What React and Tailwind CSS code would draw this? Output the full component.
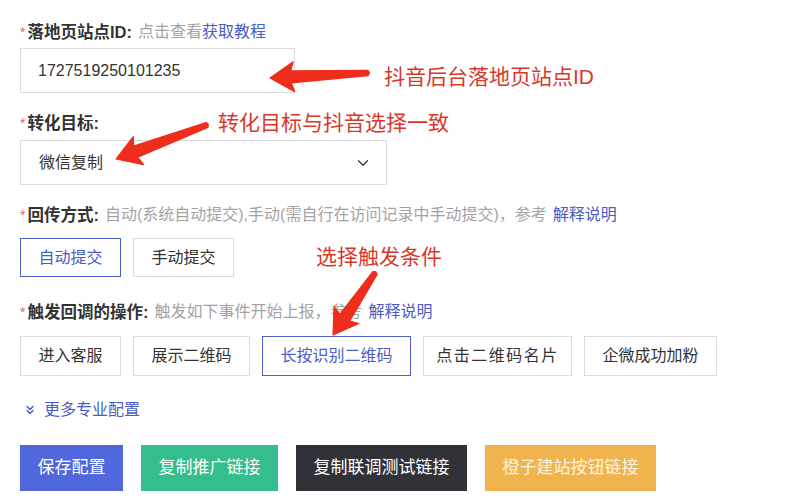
import { ChevronDown, ChevronsDown } from 'lucide-react'

const FONT = { fontFamily: '"Liberation Sans", "Noto Sans CJK SC", sans-serif' }

const TRIGGERS = [
  { label: '进入客服', w: 'w-[101px]' },
  { label: '展示二维码', w: 'w-[117px]' },
  { label: '长按识别二维码', w: 'w-[149px]', active: true },
  { label: '点击二维码名片', w: 'w-[149px]', wide: true },
  { label: '企微成功加粉', w: 'w-[133px]' },
]

const ACTIONS = [
  { label: '保存配置', cls: 'bg-[#5068dc] text-white' },
  { label: '复制推广链接', cls: 'bg-[#33be8b] text-white' },
  { label: '复制联调测试链接', cls: 'bg-[#303237] text-white' },
  { label: '橙子建站按钮链接', cls: 'bg-[#f0b44e] text-[#fdf3e0]' },
]

// 表单项标题：红色星号 + 粗体标题 + 灰色说明
function Label({ title, children }) {
  return (
    <div className="flex h-6 items-center text-base leading-6 whitespace-nowrap">
      <span className="mr-[2px] text-[14px] text-[#e8625a]">*</span>
      <span className="text-[16.5px] font-bold text-[#333]">{title}</span>
      <span className="ml-[6px] text-base text-[#a3a3a3]">{children}</span>
    </div>
  )
}

// 截图上的红色标注箭头，tip 为箭头尖端，tail 为尾部
function Arrow({ tip, tail }) {
  const dx = tail[0] - tip[0]
  const dy = tail[1] - tip[1]
  const L = Math.hypot(dx, dy)
  const deg = (Math.atan2(dy, dx) * 180) / Math.PI
  const pts = `0,0 24,-15 21,-6 ${L},-2.6 ${L + 1.5},0 ${L},2.6 21,6 24,15`
  return (
    <polygon
      points={pts}
      fill="#ee2d1c"
      stroke="#ee2d1c"
      strokeWidth="1.2"
      strokeLinejoin="round"
      transform={`translate(${tip[0]} ${tip[1]}) rotate(${deg})`}
    />
  )
}

export default function App() {
  return (
    <div className="relative h-[500px] w-[809px] overflow-hidden bg-white pl-5 pt-5" style={FONT}>
      {/* 落地页站点ID */}
      <Label title="落地页站点ID:">
        点击查看<span className="text-[#4a5cc5]">获取教程</span>
      </Label>
      <div className="mt-1 flex h-[45px] w-[275px] items-center border border-[#dcdcdc] px-[17px] text-base text-[#333]">
        1727519250101235
      </div>

      {/* 转化目标 */}
      <div className="mt-[18px]">
        <Label title="转化目标:" />
      </div>
      <div className="mt-[5px] flex h-[45px] w-[367px] items-center justify-between border border-[#dcdcdc] pl-[18px] pr-[14px] text-base text-[#333]">
        <span>微信复制</span>
        <ChevronDown size={18} strokeWidth={1.6} className="text-[#333]" />
      </div>

      {/* 回传方式 */}
      <div className="mt-[18px]">
        <Label title="回传方式:">
          自动(系统自动提交),手动(需自行在访问记录中手动提交)，参考
          <span className="ml-[6px] text-[#4a5cc5]">解释说明</span>
        </Label>
      </div>
      <div className="mt-[11px] flex gap-3">
        <button className="h-[39px] w-[101px] border border-[#4f60c8] text-base text-[#4a5cc5]">自动提交</button>
        <button className="h-[39px] w-[101px] border border-[#dcdcdc] text-base text-[#333]">手动提交</button>
      </div>

      {/* 触发回调的操作 */}
      <div className="mt-[23px]">
        <Label title="触发回调的操作:">
          触发如下事件开始上报，参考
          <span className="ml-[6px] text-[#4a5cc5]">解释说明</span>
        </Label>
      </div>
      <div className="mt-3 flex gap-3">
        {TRIGGERS.map(({ label, w, active, wide }) => (
          <button
            key={label}
            className={
              'h-10 border text-base ' +
              w +
              (active ? ' border-[#4f60c8] text-[#4a5cc5]' : ' border-[#dcdcdc] text-[#333]') +
              (wide ? ' tracking-[1.5px]' : '')
            }
          >
            {label}
          </button>
        ))}
      </div>

      {/* 更多专业配置 */}
      <div className="mt-[22px] flex h-6 items-center gap-[7px] pl-[3px] text-base text-[#4a5cc5]">
        <ChevronsDown size={14} strokeWidth={2.6} />
        更多专业配置
      </div>

      {/* 底部操作 */}
      <div className="mt-[23px] flex gap-[18px]">
        {ACTIONS.map(({ label, cls }) => (
          <button key={label} className={'h-[46px] px-[17.5px] text-[17px] ' + cls}>
            {label}
          </button>
        ))}
      </div>

      {/* 红色标注 */}
      <svg className="pointer-events-none absolute inset-0" width="809" height="500">
        <Arrow tip={[270, 78]} tail={[368, 73]} />
        <Arrow tip={[116, 159]} tail={[207, 125]} />
        <Arrow tip={[333, 335]} tail={[375, 273]} />
      </svg>
      <span className="absolute left-[384px] top-[66px] text-[21px] leading-[22px] text-[#d8382a]">抖音后台落地页站点ID</span>
      <span className="absolute left-[218px] top-[112px] text-[21px] leading-[22px] text-[#d8382a]">转化目标与抖音选择一致</span>
      <span className="absolute left-[316px] top-[246px] text-[21px] leading-[22px] text-[#d8382a]">选择触发条件</span>
    </div>
  )
}
